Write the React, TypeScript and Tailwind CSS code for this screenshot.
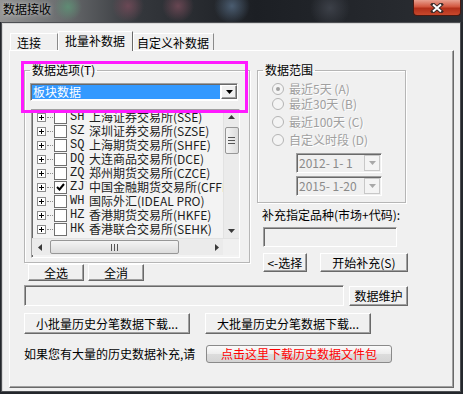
import React from 'react';

const FONT = { fontFamily: '"Noto Sans CJK SC", "Noto Sans", sans-serif' };

const raised =
  'bg-[#f0f0f0] border border-t-white border-l-white border-r-[#696969] border-b-[#696969] shadow-[inset_-1px_-1px_0_#a0a0a0]';
const sunken =
  'border border-t-[#a0a0a0] border-l-[#a0a0a0] border-r-white border-b-white shadow-[inset_1px_1px_0_#696969]';
const disabledText = 'text-[#a0a0a0] [text-shadow:1px_1px_0_#fff]';

const Btn = ({ className, children }: { className: string; children: React.ReactNode }) => (
  <div className={`${raised} flex items-center justify-center text-[12px] leading-[14px] text-black ${className}`}>
    {children}
  </div>
);

const Plus = () => (
  <svg width="9" height="9" className="shrink-0">
    <rect x="0.5" y="0.5" width="8" height="8" fill="#fff" stroke="#8c8c8c" />
    <path d="M2 4.5h5M4.5 2v5" stroke="#000" />
  </svg>
);

const Tri = ({ color = '#000', up = false }: { color?: string; up?: boolean }) => (
  <svg width="7" height="4">
    <path d={up ? 'M0 4L3.5 0L7 4Z' : 'M0 0L7 0L3.5 4Z'} fill={color} />
  </svg>
);

const markets = [
  { code: 'SH', name: '上海证券交易所(SSE)' },
  { code: 'SZ', name: '深圳证券交易所(SZSE)' },
  { code: 'SQ', name: '上海期货交易所(SHFE)' },
  { code: 'DQ', name: '大连商品交易所(DCE)' },
  { code: 'ZQ', name: '郑州期货交易所(CZCE)' },
  { code: 'ZJ', name: '中国金融期货交易所(CFFEX)', checked: true },
  { code: 'WH', name: '国际外汇(IDEAL PRO)' },
  { code: 'HZ', name: '香港期货交易所(HKFE)' },
  { code: 'HK', name: '香港联合交易所(SEHK)' },
];

const Radio = ({ label, checked, className }: { label: string; checked?: boolean; className: string }) => (
  <div className={`flex items-center h-[14px] ${className}`}>
    <div className="ml-[9px] w-[12px] h-[12px] rounded-full border border-[#b4b4b4] bg-[#f4f4f4] flex items-center justify-center">
      {checked && <div className="w-[4px] h-[4px] rounded-full bg-[#a0a0a0]" />}
    </div>
    <span className={`ml-[5px] text-[12px] leading-[14px] whitespace-nowrap ${disabledText}`}>{label}</span>
  </div>
);

const DateBox = ({ value, className }: { value: string; className: string }) => (
  <div className={`${sunken} w-[86px] h-[20px] ml-[33px] flex items-center bg-[#f0f0f0] ${className}`}>
    <span className="flex-1 pl-[2px] whitespace-pre text-[12px] leading-[14px] text-[#8a8a8a]">{value}</span>
    <div className="w-[16px] h-[16px] mr-[1px] border border-[#c8c8c8] bg-[#f4f4f4] flex items-center justify-center">
      <Tri color="#a8a8a8" />
    </div>
  </div>
);

export default function App() {
  return (
    <div className="relative w-[463px] h-[394px] overflow-hidden bg-[#24272c]" style={FONT}>
      {/* title bar */}
      <div className="h-[22px] bg-[radial-gradient(circle_at_68px_7px,#5f8c74_0,transparent_14px),radial-gradient(circle_at_128px_6px,#6b4855_0,transparent_16px),radial-gradient(circle_at_178px_6px,#684652_0,transparent_16px),radial-gradient(circle_at_232px_6px,#4a5c70_0,transparent_18px),radial-gradient(circle_at_330px_8px,#3c4048_0,transparent_20px),linear-gradient(90deg,#959595_0%,#6e7072_12%,#34373c_30%,#1c1f24_55%,#2b2e33_100%)]">
        <div className="pl-[3px] pt-[2px] text-[12px] leading-[14px] text-black [text-shadow:0_0_4px_#ddd]">数据接收</div>
      </div>
      <div className="absolute right-[2px] top-0 w-[48px] h-[16px] rounded-b-[4px] border border-t-0 border-[#4a1a12] bg-[linear-gradient(180deg,#e8a090_0%,#d2563e_45%,#b2301a_55%,#c8482c_100%)] flex items-center justify-center">
        <svg width="14" height="10">
          <path d="M3 1.5L11 8.5M11 1.5L3 8.5" stroke="#3a2a28" strokeWidth="4" strokeLinecap="square" />
          <path d="M3 1.5L11 8.5M11 1.5L3 8.5" stroke="#fff" strokeWidth="2" />
        </svg>
      </div>

      {/* window client */}
      <div className="ml-[1px] w-[460px] h-[370px] border border-[#4e5054] bg-[#f0f0f0] shadow-[inset_1px_1px_0_#d8d8d8]">
        {/* tabs */}
        <div className="flex items-end h-[27px] pl-[8px] text-[12px] leading-[14px] text-black">
          <div className="w-[48px] h-[17px] border border-b-0 border-t-white border-l-white border-r-[#8a8a8a] pl-[6px] pt-[2px]">连接</div>
          <div className="relative z-10 w-[75px] h-[20px] mb-[-1px] border border-b-0 border-t-white border-l-white border-r-[#696969] bg-[#f0f0f0] pl-[6px] pt-[2px]">批量补数据</div>
          <div className="w-[81px] h-[17px] border border-b-0 border-t-white border-l-white border-r-[#8a8a8a] pl-[3px] pt-[2px]">自定义补数据</div>
        </div>

        {/* tab panel */}
        <div className="ml-[7px] w-[445px] h-[338px] border border-t-white border-l-white border-r-[#696969] border-b-[#696969] shadow-[inset_-1px_-1px_0_#a0a0a0] pl-[14px] pt-[12px] text-[12px] leading-[14px] text-black">
          <div className="flex items-start gap-[7px]">
            {/* left column */}
            <div className="w-[226px]">
              <fieldset className="h-[200px] px-[5px] border border-[#b6b6b6] shadow-[1px_1px_0_#fff,inset_1px_1px_0_#fff]">
                <legend className="px-[2px] leading-[14px]">数据选项(T)</legend>
                <div className={`${sunken} mt-[6px] w-[208px] h-[18px] flex items-center bg-white`}>
                  <div className="flex-1 h-[14px] ml-[1px] bg-[#3399ff] text-white pl-[1px] leading-[14px]">板块数据</div>
                  <div className={`${raised} w-[16px] h-[14px] ml-[1px] flex items-center justify-center`}>
                    <Tri />
                  </div>
                </div>
                <div className={`${sunken} mt-[8px] ml-[1px] w-[209px] h-[149px] flex flex-col bg-[#f3f3f3] overflow-hidden`}>
                  <div className="flex h-[128px] overflow-hidden">
                    <div className="flex-1 min-w-0 h-[128px] overflow-hidden">
                      {markets.map((m) => (
                        <div key={m.code} className="flex items-center h-[14px] leading-[14px] pl-[5px] whitespace-nowrap text-[#1e1e1e]">
                          <Plus />
                          <span className="shrink-0 w-[6px] mx-[1px] border-t border-dotted border-[#8c8c8c]" />
                          <div className="shrink-0 w-[13px] h-[13px] border border-[#6f6f6f] bg-white flex items-center justify-center">
                            {m.checked && (
                              <svg width="9" height="8">
                                <path d="M1 4L3.5 6.5L8 1" stroke="#000" strokeWidth="2" fill="none" />
                              </svg>
                            )}
                          </div>
                          <span className="shrink-0 w-[19px] ml-[3px] text-[12px]" style={{ fontFamily: '"Liberation Mono", monospace' }}>{m.code}</span>
                          <span>{m.name}</span>
                        </div>
                      ))}
                    </div>
                    {/* vertical scrollbar */}
                    <div className="w-[16px] shrink-0 bg-[#ebebeb] flex flex-col items-center border-l border-[#e2e2e2]">
                      <div className="h-[14px] flex items-center">
                        <Tri up color="#3a3a3a" />
                      </div>
                      <div className="mt-[3px] w-[14px] h-[27px] rounded-[2px] border border-[#979797] bg-[linear-gradient(90deg,#f4f4f4,#dcdcdc)] flex flex-col items-center justify-center gap-[2px]">
                        <div className="w-[7px] h-[1px] bg-[#555]" />
                        <div className="w-[7px] h-[1px] bg-[#555]" />
                        <div className="w-[7px] h-[1px] bg-[#555]" />
                      </div>
                      <div className="flex-1" />
                      <div className="h-[14px] flex items-center">
                        <Tri color="#3a3a3a" />
                      </div>
                    </div>
                  </div>
                  {/* horizontal scrollbar */}
                  <div className="h-[17px] shrink-0 flex bg-[#ebebeb] border-t border-[#e2e2e2]">
                    <div className="w-[16px] flex items-center justify-center">
                      <svg width="4" height="7"><path d="M4 0L0 3.5L4 7Z" fill="#3a3a3a" /></svg>
                    </div>
                    <div className="ml-[2px] mt-[1px] w-[129px] h-[14px] rounded-[2px] border border-[#979797] bg-[linear-gradient(180deg,#f4f4f4,#dcdcdc)] flex items-center justify-center gap-[2px]">
                      <div className="w-[1px] h-[7px] bg-[#555]" />
                      <div className="w-[1px] h-[7px] bg-[#555]" />
                      <div className="w-[1px] h-[7px] bg-[#555]" />
                    </div>
                    <div className="flex-1 flex items-center justify-end pr-[4px]">
                      <svg width="4" height="7"><path d="M0 0L4 3.5L0 7Z" fill="#3a3a3a" /></svg>
                    </div>
                    <div className="w-[16px] bg-[#f0f0f0]" />
                  </div>
                </div>
              </fieldset>
              <div className="flex gap-[4px] mt-[1px] ml-[4px]">
                <Btn className="w-[56px] h-[17px]">全选</Btn>
                <Btn className="w-[56px] h-[17px]">全消</Btn>
              </div>
            </div>

            {/* right column */}
            <div className="w-[151px]">
              <fieldset className="w-[149px] h-[140px] px-[5px] border border-[#b6b6b6] shadow-[1px_1px_0_#fff,inset_1px_1px_0_#fff]">
                <legend className="px-[2px] leading-[14px]">数据范围</legend>
                <Radio label="最近5天 (A)" checked className="mt-[5px]" />
                <Radio label="最近30天 (B)" className="mt-[1px]" />
                <Radio label="最近100天 (C)" className="mt-[4px]" />
                <Radio label="自定义时段 (D)" className="mt-[4px]" />
                <DateBox value="2012- 1- 1" className="mt-[6px]" />
                <DateBox value="2015- 1-20" className="mt-[3px]" />
              </fieldset>
              <div className="mt-[5px] ml-[5px] whitespace-nowrap">补充指定品种(市场+代码):</div>
              <div className={`${sunken} mt-[5px] ml-[6px] w-[134px] h-[20px] bg-[#f0f0f0]`} />
              <div className="flex gap-[13px] mt-[6px] ml-[6px]">
                <Btn className="w-[44px] h-[19px]">&lt;-选择</Btn>
                <Btn className="w-[89px] h-[19px]">开始补充(S)</Btn>
              </div>
            </div>
          </div>

          <div className="flex items-start gap-[5px] mt-[4px]">
            <div className={`${sunken} w-[320px] h-[21px] bg-[#f0f0f0]`} />
            <Btn className="w-[59px] h-[20px] mt-[1px]">数据维护</Btn>
          </div>

          <div className="flex gap-[15px] mt-[7px]">
            <Btn className="w-[166px] h-[21px]">小批量历史分笔数据下载...</Btn>
            <Btn className="w-[166px] h-[21px]">大批量历史分笔数据下载...</Btn>
          </div>

          <div className="flex items-center mt-[11px]">
            <span className="w-[182px] whitespace-nowrap">如果您有大量的历史数据补充,请</span>
            <div className="w-[186px] h-[18px] rounded-[3px] border border-[#8a8a8a] bg-[linear-gradient(180deg,#fbfbfb_0%,#ececec_50%,#dcdcdc_51%,#d4d4d4_100%)] flex items-center justify-center text-[#ff0000]">
              点击这里下载历史数据文件包
            </div>
          </div>
        </div>
      </div>

      {/* highlight annotation */}
      <div className="absolute left-[21px] top-[61px] w-[227px] h-[52px] border-[3px] border-[#ff1aff] pointer-events-none" />
    </div>
  );
}
